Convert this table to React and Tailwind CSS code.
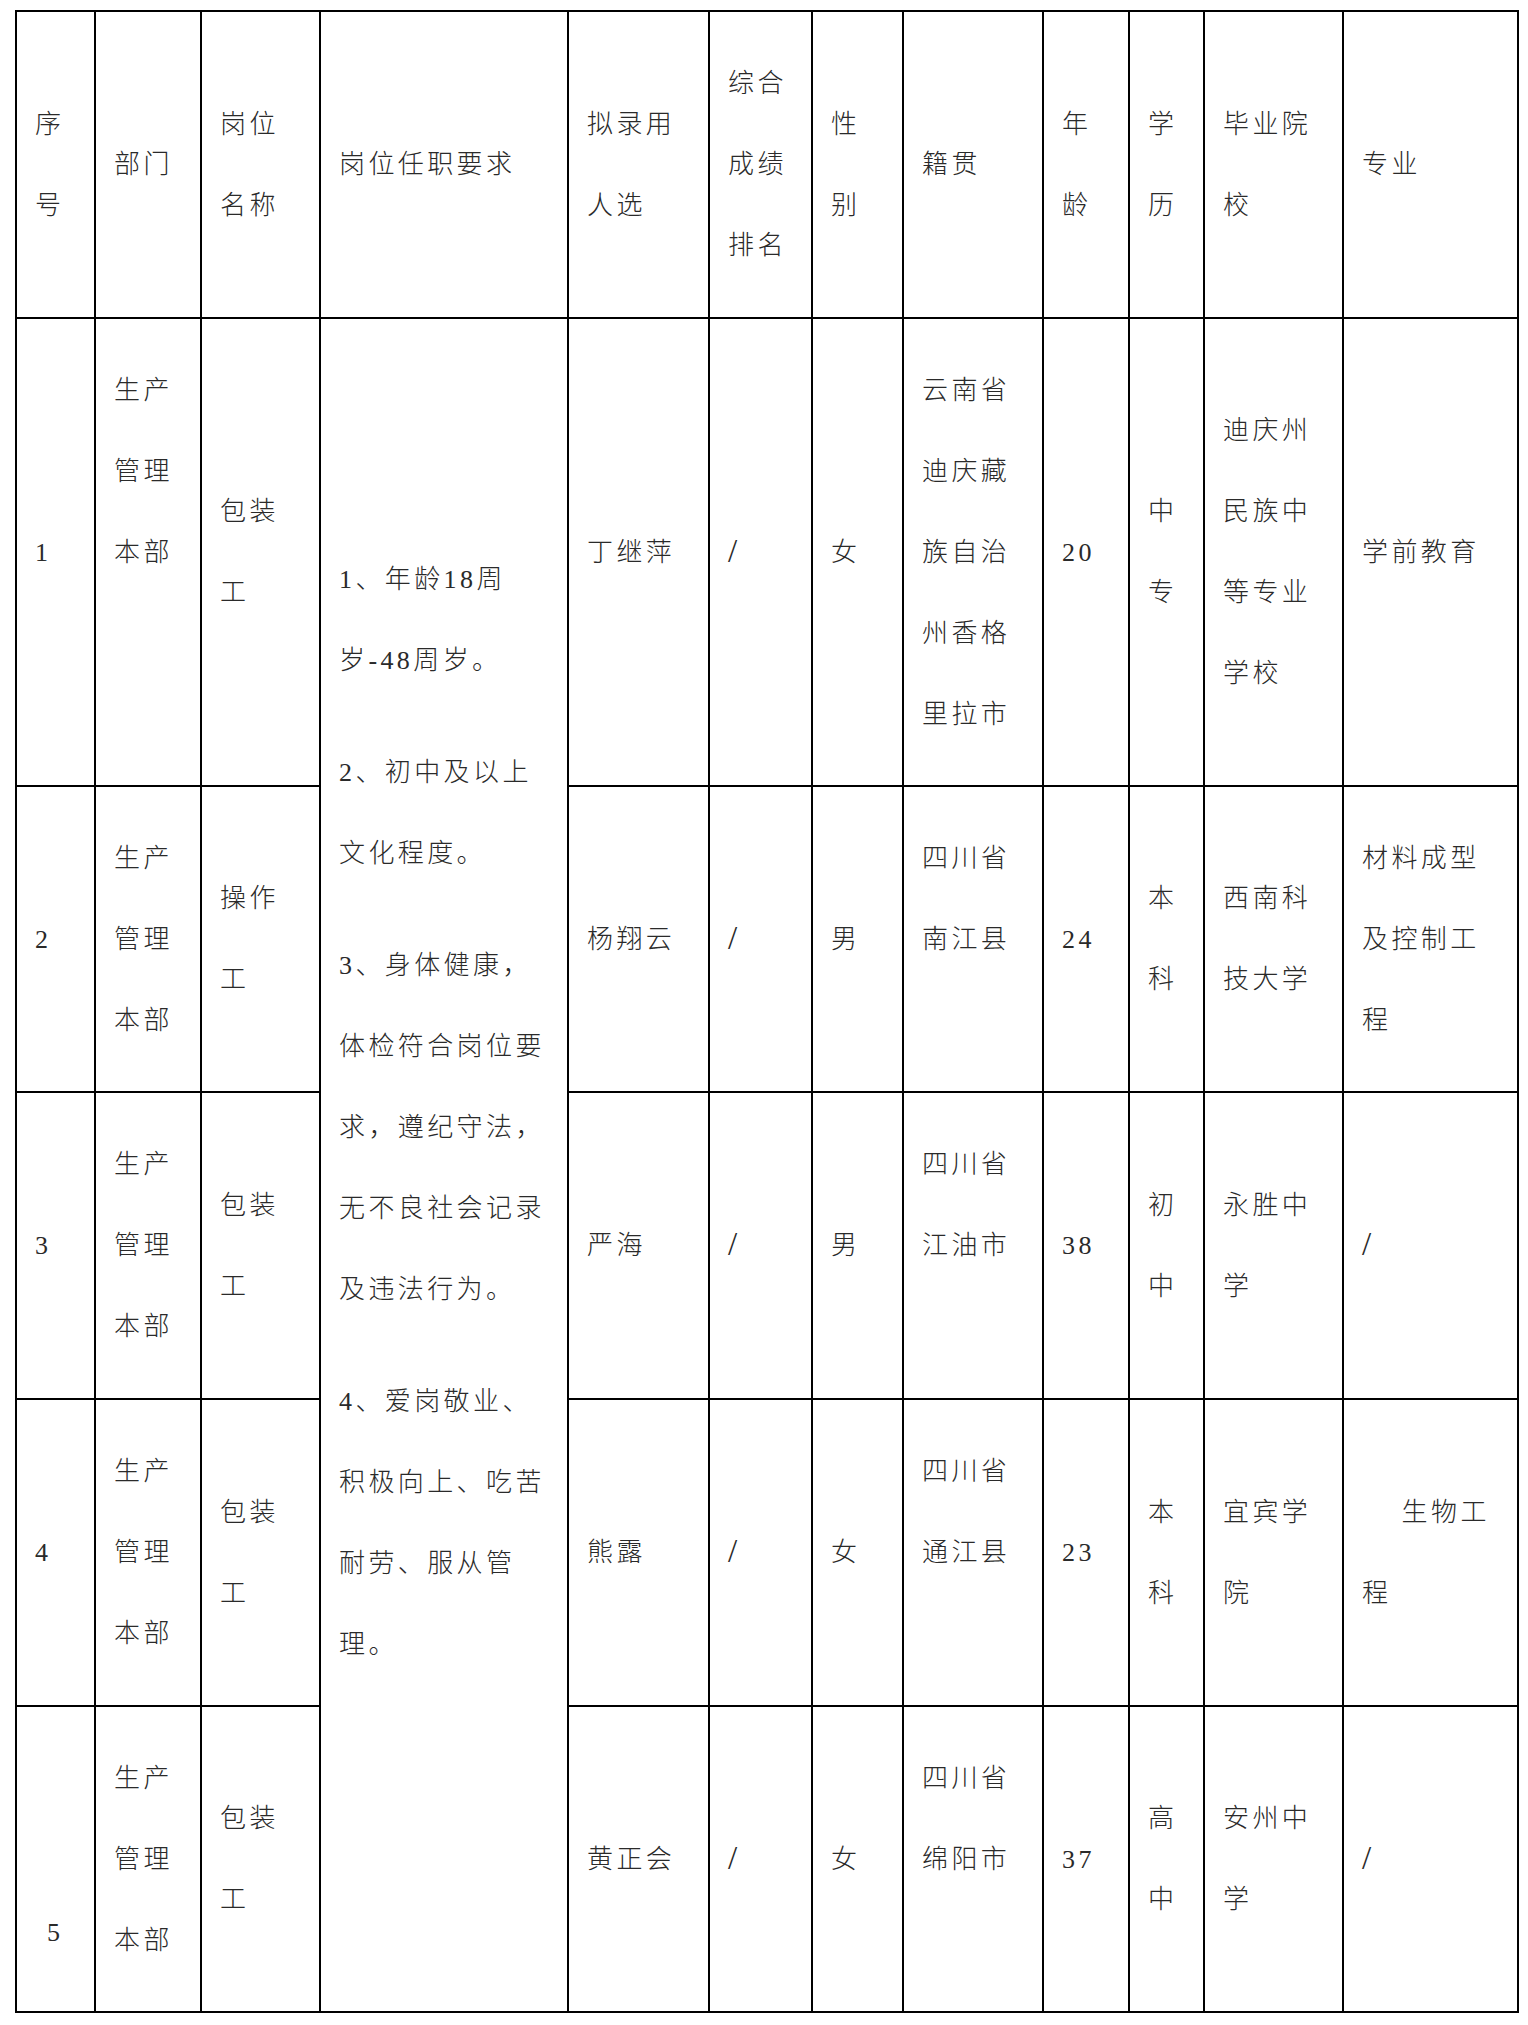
const cols = [79, 106, 119, 248, 141, 103, 91, 140, 86, 75, 139, 175]

const header = [
  ["序", "号"],
  ["部门"],
  ["岗位", "名称"],
  ["岗位任职要求"],
  ["拟录用", "人选"],
  ["综合", "成绩", "排名"],
  ["性", "别"],
  ["籍贯"],
  ["年", "龄"],
  ["学", "历"],
  ["毕业院", "校"],
  ["专业"],
]

const requirements = [
  ["1、年龄18周", "岁-48周岁。"],
  ["2、初中及以上", "文化程度。"],
  ["3、身体健康，", "体检符合岗位要", "求，遵纪守法，", "无不良社会记录", "及违法行为。"],
  ["4、爱岗敬业、", "积极向上、吃苦", "耐劳、服从管", "理。"],
]

// each row: no, dept, post, name, rank, sex, native place, age, edu, school, major
const rows = [
  {
    h: "h-[468px]",
    cells: [
      ["1"],
      ["生产", "管理", "本部", "", ""],
      ["包装", "工"],
      ["丁继萍"],
      ["/"],
      ["女"],
      ["云南省", "迪庆藏", "族自治", "州香格", "里拉市"],
      ["20"],
      ["中", "专"],
      ["迪庆州", "民族中", "等专业", "学校"],
      ["学前教育"],
    ],
  },
  {
    h: "h-[306px]",
    cells: [
      ["2"],
      ["生产", "管理", "本部"],
      ["操作", "工"],
      ["杨翔云"],
      ["/"],
      ["男"],
      ["四川省", "南江县", ""],
      ["24"],
      ["本", "科"],
      ["西南科", "技大学"],
      ["材料成型", "及控制工", "程"],
    ],
  },
  {
    h: "h-[307px]",
    cells: [
      ["3"],
      ["生产", "管理", "本部"],
      ["包装", "工"],
      ["严海"],
      ["/"],
      ["男"],
      ["四川省", "江油市", ""],
      ["38"],
      ["初", "中"],
      ["永胜中", "学"],
      ["/"],
    ],
  },
  {
    h: "h-[307px]",
    cells: [
      ["4"],
      ["生产", "管理", "本部"],
      ["包装", "工"],
      ["熊露"],
      ["/"],
      ["女"],
      ["四川省", "通江县", ""],
      ["23"],
      ["本", "科"],
      ["宜宾学", "院"],
      ["\u00a0\u00a0\u00a0\u00a0生物工", "程"],
    ],
  },
  {
    h: "h-[306px]",
    cells: [
      ["5"],
      ["生产", "管理", "本部"],
      ["包装", "工"],
      ["黄正会"],
      ["/"],
      ["女"],
      ["四川省", "绵阳市", ""],
      ["37"],
      ["高", "中"],
      ["安州中", "学"],
      ["/"],
    ],
  },
]

const font =
  "font-['Liberation_Serif','Noto_Sans_CJK_SC',serif] font-extralight text-[26px] leading-[81px] tracking-[3.4px] text-[#2a2a2a]"
const cellCls = `border-2 border-black align-middle pl-[18px] pr-1 py-0 ${font}`

function Lines({ lines }) {
  return lines.map((l, i) => {
    if (l === "/") {
      // the slash in the source is taller and thinner than the body font's
      return (
        <div key={i} className="whitespace-pre">
          <span className="text-[33px] font-['Liberation_Serif',serif]">/</span>
        </div>
      )
    }
    return (
      <div key={i} className="whitespace-pre">
        {l === "" ? "\u00a0" : l}
      </div>
    )
  })
}

export default function App() {
  return (
    <div className={`min-h-screen bg-white pt-[10px] pl-[15px] ${font}`}>
      <table className="table-fixed border-collapse">
        <colgroup>
          {cols.map((w, i) => (
            <col key={i} style={{ width: w }} />
          ))}
        </colgroup>
        <tbody>
          <tr className="h-[307px]">
            {header.map((lines, i) => (
              <td key={i} className={cellCls}>
                <Lines lines={lines} />
              </td>
            ))}
          </tr>
          {rows.map((row, ri) => (
            <tr key={ri} className={row.h}>
              {row.cells.slice(0, 3).map((lines, i) => (
                <td key={i} className={cellCls}>
                  {ri === 4 && i === 0 ? (
                    <div className="mt-[146px] pl-3">5</div>
                  ) : (
                    <Lines lines={lines} />
                  )}
                </td>
              ))}
              {ri === 0 && (
                <td rowSpan={5} className={`border-2 border-black align-top pl-[18px] pr-1 pt-[220px] ${font}`}>
                  <div className="space-y-[31px]">
                    {requirements.map((p, pi) => (
                      <div key={pi}>
                        <Lines lines={p} />
                      </div>
                    ))}
                  </div>
                </td>
              )}
              {row.cells.slice(3).map((lines, i) => (
                <td key={i + 3} className={cellCls}>
                  <Lines lines={lines} />
                </td>
              ))}
            </tr>
          ))}
        </tbody>
      </table>
    </div>
  )
}
